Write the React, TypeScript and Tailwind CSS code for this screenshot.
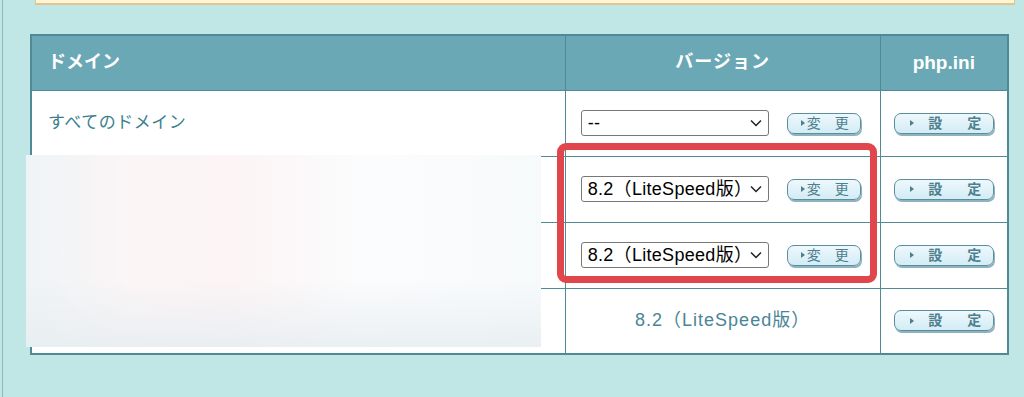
import React from "react";

const jp = { fontFamily: '"Liberation Sans", "Noto Sans CJK JP", sans-serif' };

function Btn({ children, wide }: { children: React.ReactNode; wide?: boolean }) {
  return (
    <div
      className={`flex h-[21px] items-center whitespace-nowrap rounded-[7px] border-[1.5px] border-[#5b8e9c] bg-gradient-to-b from-[#eef8fc] to-[#d3ecf5] shadow-[1px_2px_0_#8fb3be] ${
        wide ? "w-[100px] pl-[15px]" : "w-[74px] pl-[13px]"
      }`}
    >
      <span className="inline-block h-0 w-0 border-y-[3.5px] border-l-[4px] border-y-transparent border-l-[#4d7f8e]" />
      {children}
    </div>
  );
}

function FakeSelect({ text }: { text: string }) {
  return (
    <div className="flex h-[26px] w-[188px] items-center justify-between overflow-hidden rounded-[3px] border border-[#777] bg-white pl-[6px] pr-[6px] text-[18px] tracking-[0.3px] text-black">
      <span className="overflow-hidden whitespace-nowrap">{text}</span>
      <svg width="12" height="8" viewBox="0 0 12 8" className="ml-[2px] shrink-0">
        <path d="M1 1.5l5 5 5-5" fill="none" stroke="#222" strokeWidth="1.5" />
      </svg>
    </div>
  );
}

function HenkoBtn() {
  return (
    <Btn>
      <span className="ml-[2px] text-[14px] text-[#4d7f8e]" style={jp}>
        変
      </span>
      <span className="ml-[14px] text-[14px] text-[#4d7f8e]" style={jp}>
        更
      </span>
    </Btn>
  );
}

function SetteiBtn() {
  return (
    <Btn wide>
      <span className="ml-[14px] text-[14px] font-bold text-[#4d7f8e]" style={jp}>
        設
      </span>
      <span className="ml-[25px] text-[14px] font-bold text-[#4d7f8e]" style={jp}>
        定
      </span>
    </Btn>
  );
}

export default function App() {
  return (
    <div className="relative h-[397px] w-[1024px] overflow-hidden bg-[#c0e6e5]" style={jp}>
      <div className="absolute left-[2px] top-0 h-full w-[1px] bg-[#8db8b9]" />
      <div className="ml-[35px] mr-[9px] h-[5px] border-x border-b-2 border-[#e2c48e] bg-[#fff6d4]" />
      <div className="ml-[30px] mt-[29px] w-[979px]">
        <table className="w-full border-collapse border-2 border-[#4f8a96] bg-white">
          <colgroup>
            <col className="w-[536px]" />
            <col className="w-[315px]" />
            <col className="w-[128px]" />
          </colgroup>
          <thead>
            <tr className="h-[55px] bg-[#6ba8b5] font-bold text-white">
              <th className="border border-[#4f8a96] pl-[16px] text-left text-[18px]">ドメイン</th>
              <th className="border border-[#4f8a96] text-center text-[18px] tracking-[1px]">バージョン</th>
              <th className="border border-[#4f8a96] text-center text-[19px]">php.ini</th>
            </tr>
          </thead>
          <tbody>
            <tr className="h-[66px]">
              <td className="border border-[#4f8a96] pl-[16px] text-[17px] tracking-[0.5px] text-[#3b7f8f]">
                すべてのドメイン
              </td>
              <td className="border border-[#4f8a96]">
                <div className="flex items-center pl-[15px]">
                  <FakeSelect text="--" />
                  <div className="ml-[18px]">
                    <HenkoBtn />
                  </div>
                </div>
              </td>
              <td className="border border-[#4f8a96]">
                <div className="flex justify-center pl-[1px]">
                  <SetteiBtn />
                </div>
              </td>
            </tr>
            {[0, 1].map((i) => (
              <tr key={i} className="h-[66px]">
                <td className="border border-[#4f8a96]" />
                <td className="border border-[#4f8a96]">
                  <div className="flex items-center pl-[15px]">
                    <FakeSelect text="8.2（LiteSpeed版）" />
                    <div className="ml-[18px]">
                      <HenkoBtn />
                    </div>
                  </div>
                </td>
                <td className="border border-[#4f8a96]">
                  <div className="flex justify-center pl-[1px]">
                    <SetteiBtn />
                  </div>
                </td>
              </tr>
            ))}
            <tr className="h-[66px]">
              <td className="border border-[#4f8a96] text-center text-[18px] tracking-[1px] text-[#4a8597]" colSpan={1} />
              <td className="border border-[#4f8a96] text-center text-[18px] tracking-[1px] text-[#4a8597]">
                8.2（LiteSpeed版）
              </td>
              <td className="border border-[#4f8a96]">
                <div className="flex justify-center pl-[1px]">
                  <SetteiBtn />
                </div>
              </td>
            </tr>
          </tbody>
        </table>
      </div>
      {/* blurred redaction */}
      <div className="absolute left-[26px] top-[155px] h-[192px] w-[515px] bg-[linear-gradient(90deg,#eef4f6_0%,#fbf5f6_20%,#fcf4f5_40%,#fbfcfd_65%,#f7fafb_100%)]">
        <div className="h-full w-full bg-[linear-gradient(180deg,rgba(255,255,255,0)_65%,rgba(230,237,240,0.8)_100%)]" />
      </div>
      {/* red highlight */}
      <div className="absolute left-[557px] top-[143px] h-[140px] w-[320px] rounded-[9px] border-[7px] border-[#e0464b]" />
    </div>
  );
}
